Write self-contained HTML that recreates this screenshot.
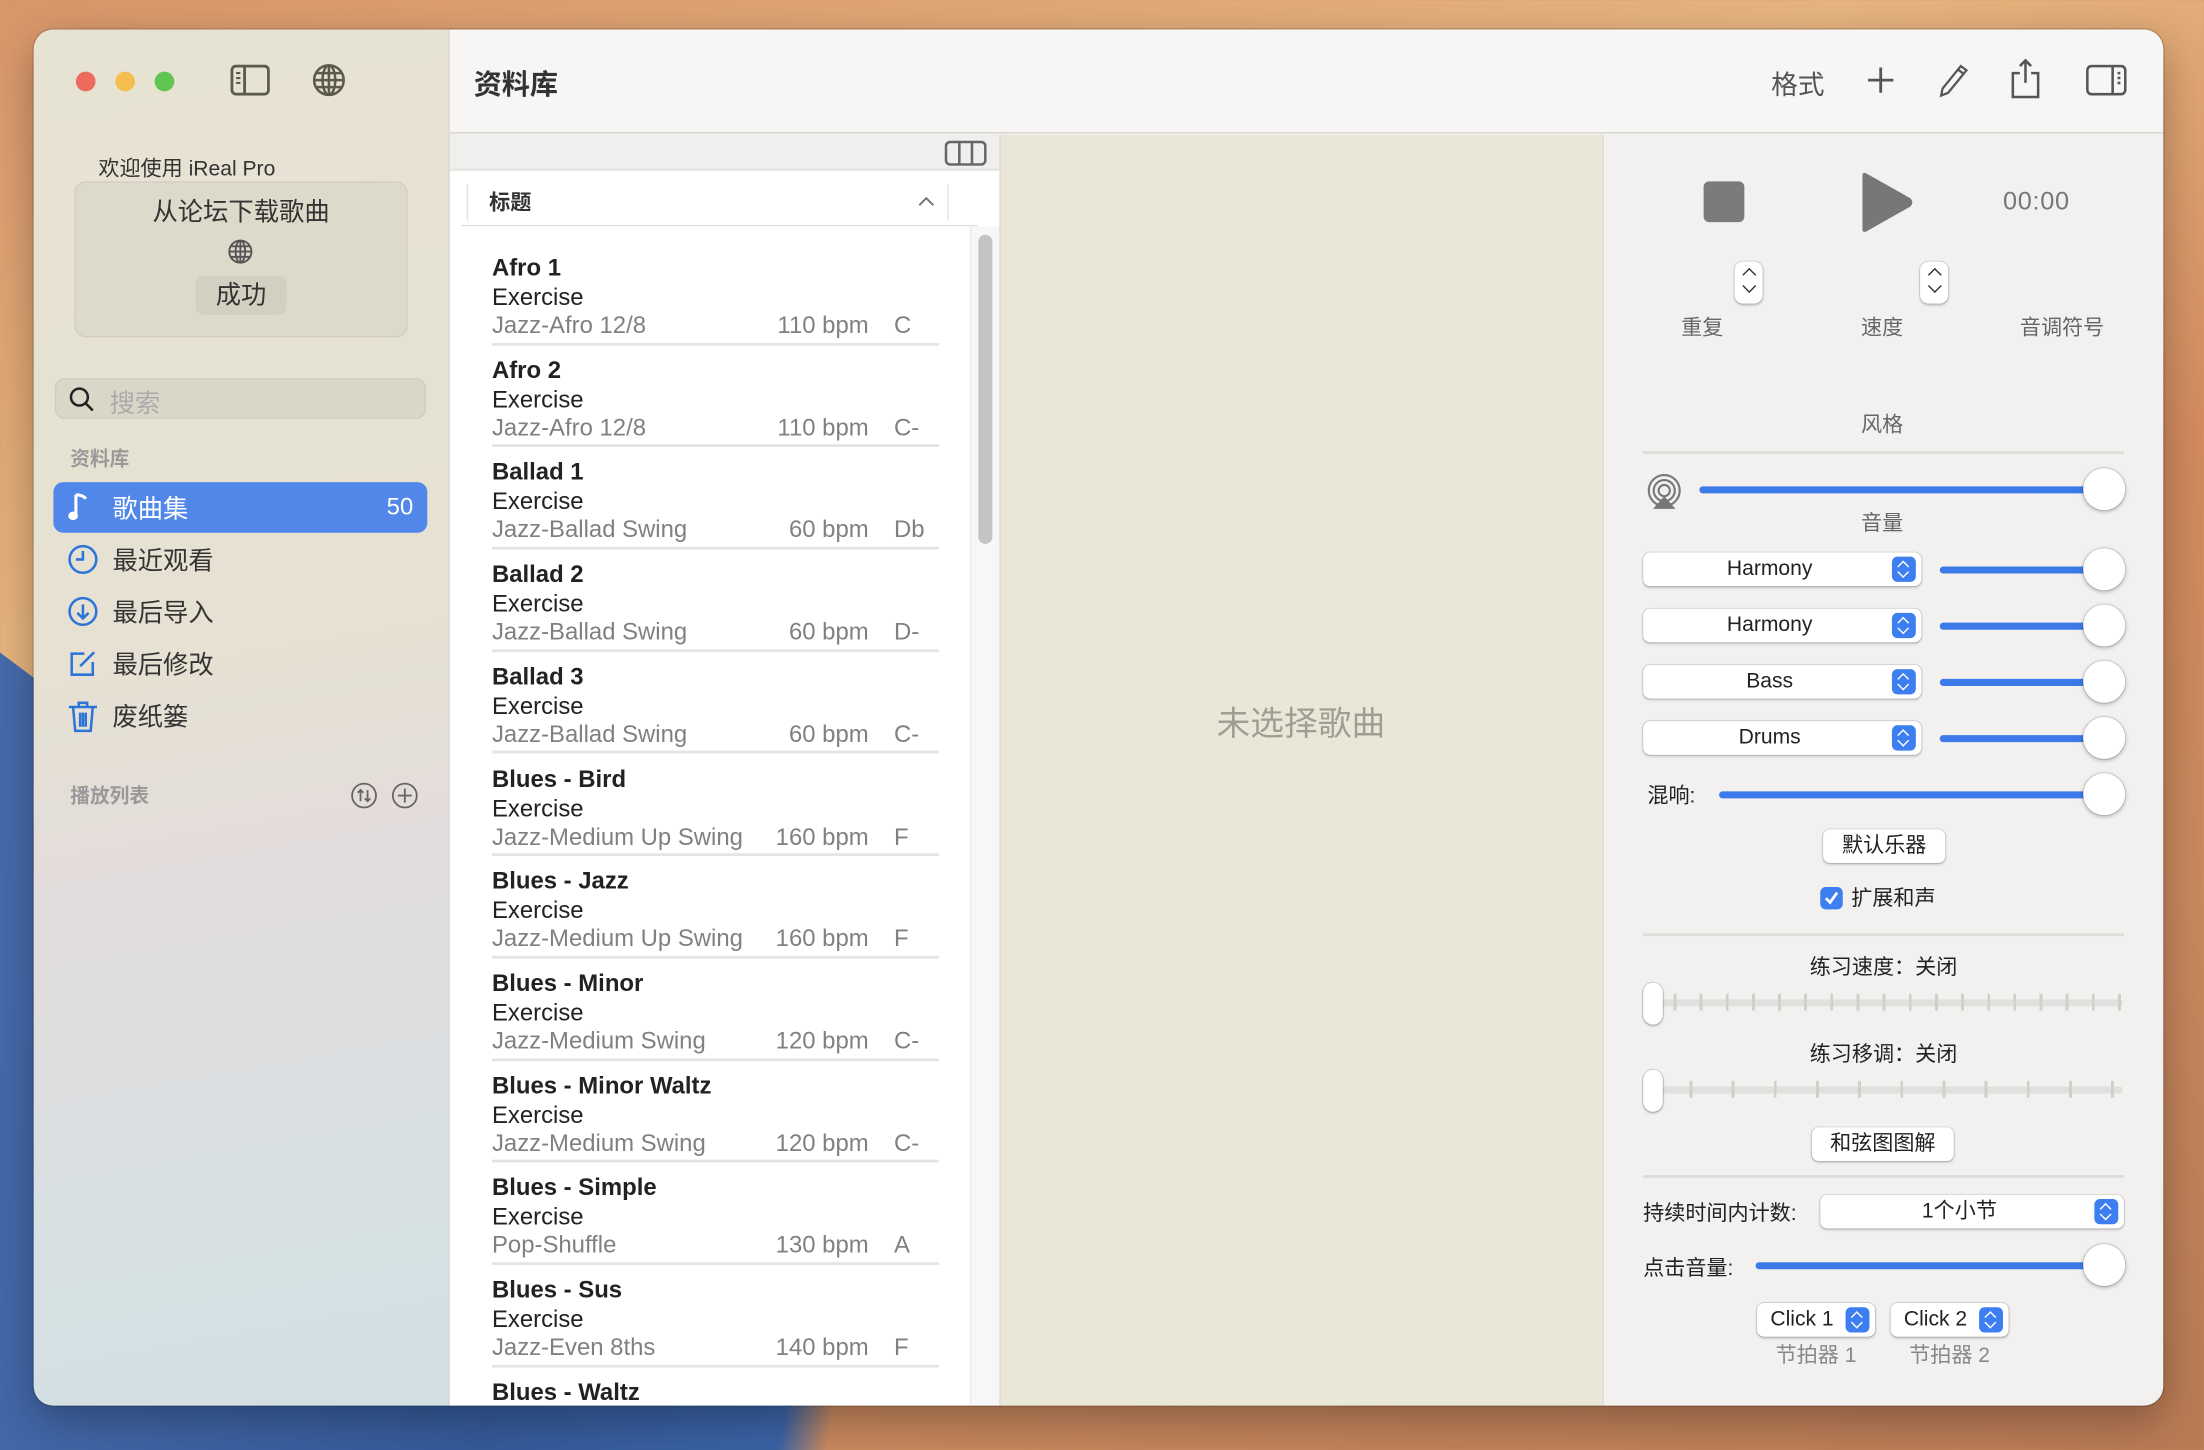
<!DOCTYPE html>
<html><head><meta charset="utf-8">
<style>
*{box-sizing:border-box;margin:0;padding:0}
html,body{width:2204px;height:1450px;overflow:hidden}
body{background:linear-gradient(160deg,#d9966a 0%,#e6b57f 30%,#d38a5e 55%,#c9895f 75%,#b87a55 100%);font-family:"Liberation Sans","Noto Sans CJK SC",sans-serif;position:relative}
#bgblue{position:absolute;left:0;top:0;width:2204px;height:1450px;background:linear-gradient(100deg,#4a6fb0 0%,#355a9a 30%,#3a63a5 42%,rgba(80,90,140,0) 44%);clip-path:polygon(0 45%,44% 95%,44% 100%,0 100%)}
#s{position:absolute;left:0;top:0;width:1568px;height:1032px;transform:scale(1.40561);transform-origin:0 0}
.a{position:absolute}
#win{left:24px;top:21px;width:1515px;height:979px;border-radius:14px;overflow:hidden;background:#f2f1ef;box-shadow:0 0 0 1px rgba(0,0,0,.15),0 10px 30px rgba(0,0,0,.3)}
#side{left:0;top:0;width:296px;height:979px;background:linear-gradient(170deg,#e7e3d3 0%,#e6e1d2 45%,#e3dcdc 60%,#d6e0e3 85%,#d2dfe3 100%);border-right:1px solid #d8d5cc}
.dot{width:14px;height:14px;border-radius:7px;top:30px}
.nav{left:14px;width:266px;height:36px;font-size:18px;color:#333}
.nav svg{position:absolute;left:10px;top:7px}
.nav span{position:absolute;left:42px;top:5px}
.row{left:0;width:370px;height:72.7px}
.row .t{position:absolute;left:30px;top:8px;font-weight:bold;font-size:17px;color:#222}
.row .e{position:absolute;left:30px;top:29px;font-size:17px;color:#222}
.row .st{position:absolute;left:30px;top:49px;font-size:17px;color:#808080}
.row .b{position:absolute;right:72px;top:49px;font-size:17px;color:#808080}
.row .k{position:absolute;left:316px;top:49px;font-size:17px;color:#808080}
.row .ln{position:absolute;left:30px;right:22px;bottom:0;height:2px;background:#e4e4e4}
.lbl{font-size:15px;color:#666}
.pop{height:24px;background:#fff;border-radius:5px;box-shadow:0 0 0 .5px rgba(0,0,0,.15),0 1px 2px rgba(0,0,0,.2);font-size:15px;color:#222;text-align:center;line-height:24px;padding-right:18px}
.pop i{position:absolute;right:4px;top:3px;width:17px;height:18px;background:#3d7ef0;border-radius:4px}
.pop i:before{content:"";position:absolute;left:5px;top:4px;width:5px;height:5px;border-left:1.5px solid #fff;border-top:1.5px solid #fff;transform:rotate(45deg)}
.pop i:after{content:"";position:absolute;left:5px;top:8px;width:5px;height:5px;border-right:1.5px solid #fff;border-bottom:1.5px solid #fff;transform:rotate(45deg)}
.track{height:5px;background:#3b7ae8;border-radius:3px}
.knob{width:30px;height:30px;border-radius:15px;background:#fff;box-shadow:0 0 0 .5px rgba(0,0,0,.15),0 1px 3px rgba(0,0,0,.3)}
.btn{height:24px;background:#fff;border-radius:5px;box-shadow:0 0 0 .5px rgba(0,0,0,.15),0 1px 2px rgba(0,0,0,.2);font-size:15px;color:#222;text-align:center;line-height:24px}
.hr{height:2px;background:#dedcda}
.step{width:20px;height:30px;background:#fff;border-radius:6px;box-shadow:0 0 0 .5px rgba(0,0,0,.15),0 1px 2px rgba(0,0,0,.2)}
.step:before{content:"";position:absolute;left:7px;top:6px;width:6px;height:6px;border-left:1.8px solid #333;border-top:1.8px solid #333;transform:rotate(45deg)}
.step:after{content:"";position:absolute;left:7px;top:14px;width:6px;height:6px;border-right:1.8px solid #333;border-bottom:1.8px solid #333;transform:rotate(45deg)}
</style></head><body>
<div id="bgblue"></div>
<div id="s">
<div id="win" class="a">
 <div id="side" class="a">
  <div class="a dot" style="left:30px;background:#ec6a5e"></div>
  <div class="a dot" style="left:58px;background:#f4bf4f"></div>
  <div class="a dot" style="left:86px;background:#61c554"></div>
  <svg class="a" style="left:140px;top:25px" width="28" height="22" viewBox="0 0 28 22"><rect x="1" y="1" width="26" height="20" rx="3" fill="none" stroke="#5d5a4c" stroke-width="2"/><line x1="10" y1="1" x2="10" y2="21" stroke="#5d5a4c" stroke-width="2"/><path d="M4 6h3M4 9.5h3M4 13h3" stroke="#5d5a4c" stroke-width="1.5"/></svg>
  <svg class="a" style="left:198px;top:24px" width="24" height="24" viewBox="0 0 24 24" fill="none" stroke="#5d5a4c" stroke-width="1.8"><circle cx="12" cy="12" r="10.5"/><ellipse cx="12" cy="12" rx="4.5" ry="10.5"/><path d="M1.5 12h21M3 7h18M3 17h18M12 1.5v21"/></svg>
  <div class="a" style="left:46px;top:88px;font-size:15px;color:#333">欢迎使用 iReal Pro</div>
  <div class="a" style="left:29px;top:108px;width:237px;height:111px;border-radius:8px;background:rgba(0,0,0,.035);border:1px solid rgba(0,0,0,.06)"></div>
  <div class="a" style="left:29px;top:116px;width:237px;text-align:center;font-size:18px;color:#333">从论坛下载歌曲</div>
  <svg class="a" style="left:138px;top:149px" width="18" height="18" viewBox="0 0 24 24" fill="none" stroke="#555" stroke-width="1.8"><circle cx="12" cy="12" r="10.5"/><ellipse cx="12" cy="12" rx="4.5" ry="10.5"/><path d="M1.5 12h21M3 7h18M3 17h18M12 1.5v21"/></svg>
  <div class="a" style="left:115px;top:175px;width:65px;height:28px;border-radius:6px;background:#d3d0c2;text-align:center;font-size:18px;line-height:28px;color:#333">成功</div>
  <div class="a" style="left:15px;top:248px;width:264px;height:29px;border-radius:7px;background:#dbd7c8;border:1px solid rgba(0,0,0,.05)"></div>
  <svg class="a" style="left:25px;top:254px" width="18" height="18" viewBox="0 0 18 18" fill="none" stroke="#222" stroke-width="1.8"><circle cx="7.5" cy="7.5" r="6"/><path d="M12 12l5 5"/></svg>
  <div class="a" style="left:54px;top:252px;font-size:18px;color:#aaa">搜索</div>
  <div class="a" style="left:26px;top:295px;font-size:14px;color:#999;font-weight:bold">资料库</div>
  <div class="a nav" style="top:322px;background:#5087e8;border-radius:7px;color:#fff">
   <svg width="16" height="22" viewBox="0 0 16 22"><path d="M6 2v14" stroke="#fff" stroke-width="2.2"/><path d="M6 2c3 0 6 1 7 3" stroke="#fff" stroke-width="2.2" fill="none"/><ellipse cx="4" cy="17" rx="3.5" ry="3" fill="#fff"/></svg>
   <span>歌曲集</span><span style="left:auto;right:10px;top:8px;font-size:17px">50</span></div>
  <div class="a nav" style="top:359px"><svg width="22" height="22" viewBox="0 0 22 22" fill="none" stroke="#2c74d8" stroke-width="1.8"><circle cx="11" cy="11" r="9.5"/><path d="M11 5v6H6"/></svg><span>最近观看</span></div>
  <div class="a nav" style="top:396px"><svg width="22" height="22" viewBox="0 0 22 22" fill="none" stroke="#2c74d8" stroke-width="1.8"><circle cx="11" cy="11" r="9.5"/><path d="M11 6v10M7 12l4 4 4-4"/></svg><span>最后导入</span></div>
  <div class="a nav" style="top:433px"><svg width="22" height="22" viewBox="0 0 22 22" fill="none" stroke="#2c74d8" stroke-width="1.8"><path d="M12 4H3v15h15v-9"/><path d="M9 13l10-10"/></svg><span>最后修改</span></div>
  <div class="a nav" style="top:470px"><svg width="22" height="24" viewBox="0 0 22 24" fill="none" stroke="#2c74d8" stroke-width="1.8"><path d="M1 5h20M8 5V2h6v3M4 5l1.5 17h11L18 5M9 9v10M11 9v10M13 9v10"/></svg><span>废纸篓</span></div>
  <div class="a" style="left:26px;top:535px;font-size:14px;color:#999;font-weight:bold">播放列表</div>
  <svg class="a" style="left:225px;top:535px" width="20" height="20" viewBox="0 0 20 20" fill="none" stroke="#666" stroke-width="1.3"><circle cx="10" cy="10" r="8.5"/><path d="M7.5 14V6M5.5 8l2-2 2 2M12.5 6v8M10.5 12l2 2 2-2"/></svg>
  <svg class="a" style="left:254px;top:535px" width="20" height="20" viewBox="0 0 20 20" fill="none" stroke="#666" stroke-width="1.3"><circle cx="10" cy="10" r="8.5"/><path d="M10 5v10M5 10h10"/></svg>
 </div>
 <div class="a" style="left:296px;top:0;width:1219px;height:74px;background:#f7f6f4;border-bottom:1px solid #d6d5d2"></div>
 <div class="a" style="left:313px;top:23px;font-size:20px;font-weight:bold;color:#333">资料库</div>
 <div class="a" style="left:1236px;top:25px;font-size:19px;color:#555">格式</div>
 <svg class="a" style="left:1304px;top:26px" width="20" height="20" viewBox="0 0 20 20"><path d="M10 1v18M1 10h18" stroke="#555" stroke-width="2"/></svg>
 <svg class="a" style="left:1354px;top:23px" width="24" height="26" viewBox="0 0 24 26" fill="none" stroke="#555" stroke-width="1.6"><path d="M4 19L17 3l4 3L8 22l-5 2z M15 5.5l4 3"/></svg>
 <svg class="a" style="left:1406px;top:20px" width="22" height="30" viewBox="0 0 22 30" fill="none" stroke="#555" stroke-width="1.8"><path d="M7 11H2v17h18V11h-5M11 2v16M7 6l4-4 4 4"/></svg>
 <svg class="a" style="left:1460px;top:25px" width="29" height="22" viewBox="0 0 29 22" fill="none" stroke="#555" stroke-width="1.8"><rect x="1" y="1" width="27" height="20" rx="3"/><path d="M19 1v20M22.5 6h2M22.5 9.5h2M22.5 13h2"/></svg>
 <div class="a" style="left:296px;top:75px;width:391px;height:25px;background:#f0efed;border-bottom:1px solid #e0dfdc"></div>
 <svg class="a" style="left:648px;top:79px" width="30" height="18" viewBox="0 0 30 18" fill="none" stroke="#666" stroke-width="1.8"><rect x="1" y="1" width="28" height="16" rx="3"/><path d="M10.5 1v16M19.5 1v16"/></svg>
 <div class="a" style="left:296px;top:101px;width:391px;height:878px;background:#fff"></div>
 <div class="a" style="left:308px;top:110px;width:1px;height:26px;background:#e2e2e2"></div>
 <div class="a" style="left:650px;top:110px;width:1px;height:26px;background:#e2e2e2"></div>
 <div class="a" style="left:324px;top:112px;font-size:15px;font-weight:bold;color:#333">标题</div>
 <svg class="a" style="left:629px;top:118px" width="12" height="8" viewBox="0 0 12 8"><path d="M1 7l5-5 5 5" stroke="#777" stroke-width="1.4" fill="none"/></svg>
 <div class="a" style="left:304px;top:139px;width:368px;height:1px;background:#e0e0e0"></div>
 <div class="a" style="left:666px;top:140px;width:21px;height:839px;background:#f7f7f7;border-left:1px solid #ececec"></div>
 <div class="a" style="left:672px;top:146px;width:10px;height:220px;border-radius:5px;background:#c4c4c4"></div>
 <div class="a" style="left:296px;top:152px;width:370px;height:827px;overflow:hidden">
  <div class="a row" style="top:0"><div class="t">Afro 1</div><div class="e">Exercise</div><div class="st">Jazz-Afro 12/8</div><div class="b">110 bpm</div><div class="k">C</div><div class="ln"></div></div>
  <div class="a row" style="top:72.7px"><div class="t">Afro 2</div><div class="e">Exercise</div><div class="st">Jazz-Afro 12/8</div><div class="b">110 bpm</div><div class="k">C-</div><div class="ln"></div></div>
  <div class="a row" style="top:145.4px"><div class="t">Ballad 1</div><div class="e">Exercise</div><div class="st">Jazz-Ballad Swing</div><div class="b">60 bpm</div><div class="k">Db</div><div class="ln"></div></div>
  <div class="a row" style="top:218.1px"><div class="t">Ballad 2</div><div class="e">Exercise</div><div class="st">Jazz-Ballad Swing</div><div class="b">60 bpm</div><div class="k">D-</div><div class="ln"></div></div>
  <div class="a row" style="top:290.8px"><div class="t">Ballad 3</div><div class="e">Exercise</div><div class="st">Jazz-Ballad Swing</div><div class="b">60 bpm</div><div class="k">C-</div><div class="ln"></div></div>
  <div class="a row" style="top:363.5px"><div class="t">Blues - Bird</div><div class="e">Exercise</div><div class="st">Jazz-Medium Up Swing</div><div class="b">160 bpm</div><div class="k">F</div><div class="ln"></div></div>
  <div class="a row" style="top:436.2px"><div class="t">Blues - Jazz</div><div class="e">Exercise</div><div class="st">Jazz-Medium Up Swing</div><div class="b">160 bpm</div><div class="k">F</div><div class="ln"></div></div>
  <div class="a row" style="top:508.9px"><div class="t">Blues - Minor</div><div class="e">Exercise</div><div class="st">Jazz-Medium Swing</div><div class="b">120 bpm</div><div class="k">C-</div><div class="ln"></div></div>
  <div class="a row" style="top:581.6px"><div class="t">Blues - Minor Waltz</div><div class="e">Exercise</div><div class="st">Jazz-Medium Swing</div><div class="b">120 bpm</div><div class="k">C-</div><div class="ln"></div></div>
  <div class="a row" style="top:654.3px"><div class="t">Blues - Simple</div><div class="e">Exercise</div><div class="st">Pop-Shuffle</div><div class="b">130 bpm</div><div class="k">A</div><div class="ln"></div></div>
  <div class="a row" style="top:727px"><div class="t">Blues - Sus</div><div class="e">Exercise</div><div class="st">Jazz-Even 8ths</div><div class="b">140 bpm</div><div class="k">F</div><div class="ln"></div></div>
  <div class="a row" style="top:799.7px"><div class="t">Blues - Waltz</div></div>
 </div>
 <div class="a" style="left:687px;top:75px;width:429px;height:904px;background:#ebe7d8;border-left:1px solid #dedbd2"></div>
 <div class="a" style="left:687px;top:474px;width:429px;text-align:center;font-size:24px;color:#a19d92">未选择歌曲</div>
 <div class="a" style="left:1116px;top:75px;width:399px;height:904px;background:#f2f1ef;border-left:1px solid #dcdad6"></div>
 <div class="a" style="left:1188px;top:108px;width:29px;height:29px;border-radius:4px;background:#7b7b7b"></div>
 <svg class="a" style="left:1298px;top:100px" width="40" height="46" viewBox="0 0 40 46"><path d="M3 4Q3 1 6 2.5L37 20Q40 23 37 26L6 43.5Q3 45 3 42Z" fill="#777"/></svg>
 <div class="a" style="left:1401px;top:112px;font-size:18px;color:#777;letter-spacing:.5px">00:00</div>
 <div class="a step" style="left:1210px;top:165px"></div>
 <div class="a step" style="left:1342px;top:165px"></div>
 <div class="a lbl" style="left:1172px;top:201px">重复</div>
 <div class="a lbl" style="left:1300px;top:201px">速度</div>
 <div class="a lbl" style="left:1413px;top:201px">音调符号</div>
 <div class="a lbl" style="left:1300px;top:270px">风格</div>
 <div class="a hr" style="left:1145px;top:300px;width:342px"></div>
 <svg class="a" style="left:1147px;top:316px" width="26" height="26" viewBox="0 0 26 26" fill="none" stroke="#777" stroke-width="1.5"><circle cx="13" cy="12" r="11"/><circle cx="13" cy="12" r="7.5"/><circle cx="13" cy="12" r="4"/><path d="M5 25L13 16l8 9z" fill="#777" stroke="none"/></svg>
 <div class="a track" style="left:1185px;top:325px;width:290px"></div><div class="a knob" style="left:1458px;top:312px"></div>
 <div class="a lbl" style="left:1300px;top:340px">音量</div>
 <div class="a pop" style="left:1145px;top:372px;width:198px">Harmony<i></i></div>
 <div class="a track" style="left:1356px;top:382px;width:120px"></div><div class="a knob" style="left:1458px;top:369px"></div>
 <div class="a pop" style="left:1145px;top:412px;width:198px">Harmony<i></i></div>
 <div class="a track" style="left:1356px;top:422px;width:120px"></div><div class="a knob" style="left:1458px;top:409px"></div>
 <div class="a pop" style="left:1145px;top:452px;width:198px">Bass<i></i></div>
 <div class="a track" style="left:1356px;top:462px;width:120px"></div><div class="a knob" style="left:1458px;top:449px"></div>
 <div class="a pop" style="left:1145px;top:492px;width:198px">Drums<i></i></div>
 <div class="a track" style="left:1356px;top:502px;width:120px"></div><div class="a knob" style="left:1458px;top:489px"></div>
 <div class="a" style="left:1148px;top:534px;font-size:15px;color:#222">混响:</div>
 <div class="a track" style="left:1199px;top:542px;width:276px"></div><div class="a knob" style="left:1458px;top:529px"></div>
 <div class="a btn" style="left:1273px;top:569px;width:87px">默认乐器</div>
 <div class="a" style="left:1271px;top:610px;width:16px;height:16px;border-radius:4px;background:#3d7ef0"></div>
 <svg class="a" style="left:1273px;top:612px" width="12" height="12" viewBox="0 0 12 12"><path d="M2 6l3 3 5-7" stroke="#fff" stroke-width="2" fill="none"/></svg>
 <div class="a" style="left:1293px;top:607px;font-size:15px;color:#222">扩展和声</div>
 <div class="a hr" style="left:1145px;top:643px;width:342px"></div>
 <div class="a" style="left:1145px;top:656px;width:342px;text-align:center;font-size:15px;color:#222">练习速度：关闭</div>
 <div class="a" style="left:1150px;top:690px;width:336px;height:5px;background:#e1e0de;border-radius:2px"></div>
 <div class="a" style="left:1150px;top:686px;width:336px;height:12px;background:repeating-linear-gradient(90deg,transparent 0,transparent 16.6px,#d0cfcc 16.6px,#d0cfcc 18.6px)"></div>
 <div class="a" style="left:1145px;top:678px;width:14px;height:30px;border-radius:7px;background:#fff;box-shadow:0 0 0 .5px rgba(0,0,0,.2),0 1px 2px rgba(0,0,0,.25)"></div>
 <div class="a" style="left:1145px;top:718px;width:342px;text-align:center;font-size:15px;color:#222">练习移调：关闭</div>
 <div class="a" style="left:1150px;top:752px;width:336px;height:5px;background:#e1e0de;border-radius:2px"></div>
 <div class="a" style="left:1150px;top:748px;width:336px;height:12px;background:repeating-linear-gradient(90deg,transparent 0,transparent 28px,#d0cfcc 28px,#d0cfcc 30px)"></div>
 <div class="a" style="left:1145px;top:740px;width:14px;height:30px;border-radius:7px;background:#fff;box-shadow:0 0 0 .5px rgba(0,0,0,.2),0 1px 2px rgba(0,0,0,.25)"></div>
 <div class="a btn" style="left:1265px;top:781px;width:101px">和弦图图解</div>
 <div class="a hr" style="left:1145px;top:815px;width:342px"></div>
 <div class="a" style="left:1145px;top:831px;font-size:15px;color:#222">持续时间内计数:</div>
 <div class="a pop" style="left:1271px;top:829px;width:216px">1个小节<i></i></div>
 <div class="a" style="left:1145px;top:870px;font-size:15px;color:#222">点击音量:</div>
 <div class="a track" style="left:1225px;top:877px;width:250px"></div><div class="a knob" style="left:1458px;top:864px"></div>
 <div class="a pop" style="left:1226px;top:906px;width:84px;padding-right:20px">Click 1<i></i></div>
 <div class="a pop" style="left:1321px;top:906px;width:84px;padding-right:20px">Click 2<i></i></div>
 <div class="a" style="left:1226px;top:932px;width:84px;text-align:center;font-size:15px;color:#888">节拍器 1</div>
 <div class="a" style="left:1321px;top:932px;width:84px;text-align:center;font-size:15px;color:#888">节拍器 2</div>
</div>
</div>
</body></html>
